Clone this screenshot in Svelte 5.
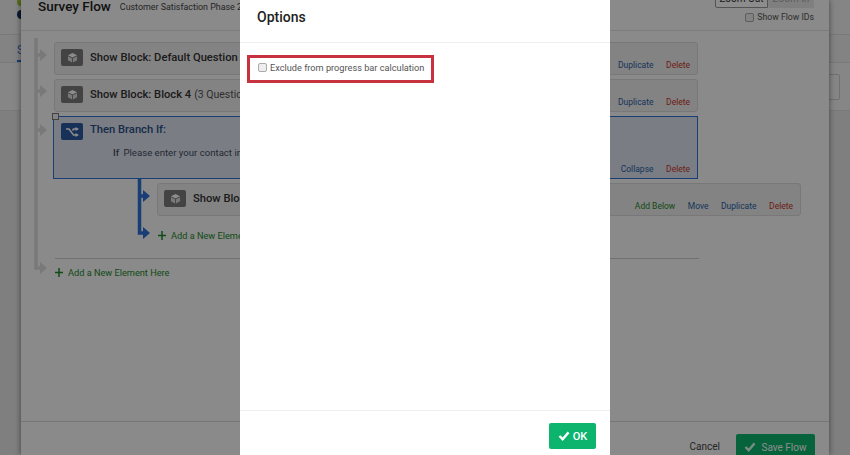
<script>
	const blocks = [
		{ title: 'Show Block: Default Question', extra: '', actions: [['Duplicate', 'blue'], ['Delete', 'red']] },
		{ title: 'Show Block: Block 4', extra: '(3 Questions)', actions: [['Duplicate', 'blue'], ['Delete', 'red']] }
	];
	const subActions = [['Add Below', 'green'], ['Move', 'blue'], ['Duplicate', 'blue'], ['Delete', 'red']];
</script>

{#snippet cube()}
	<span class="icon">
		<svg width="11" height="11" viewBox="0 0 12 12">
			<path d="M6 1 L11 3.500 L6 6 L1 3.500 Z" fill="#fff" />
			<path d="M1 4.500 L5.500 6.800 V11.500 L1 9 Z M11 4.500 L6.500 6.800 V11.500 L11 9 Z" fill="#ddd" />
		</svg>
	</span>
{/snippet}

{#snippet plus()}
	<svg width="8" height="9" viewBox="0 0 8 9"><path d="M4 0 V9 M0 4.500 H8" stroke="#1c8a2a" stroke-width="1.500" /></svg>
{/snippet}

{#snippet check(color)}
	<svg width="12" height="10" viewBox="0 0 13 11"><path d="M1.500 5.500 L5 9 L11.500 1.500" fill="none" stroke={color} stroke-width="2.600" /></svg>
{/snippet}

<div class="page">
	<div class="backdrop">
		<div class="band top"><span class="logo green"></span><span class="logo navy"></span></div>
		<div class="band tabs"><span class="tab">S</span></div>
		<div class="band tools"><span class="search"></span></div>
		<div class="band rest"></div>
	</div>

	<section class="panel">
		<header class="flow-head">
			<h1>Survey Flow</h1>
			<span class="survey-name">Customer Satisfaction Phase 2</span>
			<div class="zoom-tools">
				<div class="zoom-buttons">
					<button class="zoom-out">Zoom Out</button>
					<button class="zoom-in">Zoom In</button>
				</div>
				<label class="flow-ids"><input type="checkbox" />Show Flow IDs</label>
			</div>
		</header>

		<div class="canvas">
			<svg class="connectors" width="808" height="260" viewBox="0 0 808 260">
				<path d="M15 0 V230 H20 M15 17 H20 M15 53 H20 M15 92 H20" fill="none" stroke="#dcdcdc" stroke-width="3.500" />
				<path d="M19 11 L26 17 L19 23 Z M19 47 L26 53 L19 59 Z M19 86 L26 92 L19 98 Z M19 224 L26 230 L19 236 Z" fill="#dcdcdc" />
				<path d="M118.500 141 V195 H123 M118.500 158 H123" fill="none" stroke="#2f6fd6" stroke-width="3.500" />
				<path d="M122 152 L129 158 L122 164 Z M122 189 L129 195 L122 201 Z" fill="#2f6fd6" />
			</svg>

			{#each blocks as block}
				<div class="card">
					{@render cube()}
					<span class="title">{block.title}</span>
					{#if block.extra}<span class="extra">{block.extra}</span>{/if}
					<div class="actions">
						{#each block.actions as [label, tone]}
							<a class={tone} href="#top">{label}</a>
						{/each}
					</div>
				</div>
			{/each}

			<div class="branch">
				<span class="collapse-box"></span>
				<div class="branch-head">
					<span class="icon navy-icon">
						<svg width="14" height="10" viewBox="0 0 14 10">
							<path d="M1 2 H4 L8.500 8 H11" fill="none" stroke="#fff" stroke-width="1.500" />
							<path d="M7.500 3.500 L8.500 2 H11" fill="none" stroke="#fff" stroke-width="1.500" />
							<path d="M10.500 0 L14 2 L10.500 4 Z M10.500 6 L14 8 L10.500 10 Z" fill="#fff" />
						</svg>
					</span>
					<span class="title branch-title">Then Branch If:</span>
				</div>
				<p class="condition"><b>If</b> Please enter your contact information</p>
				<div class="actions branch-actions">
					<a class="blue" href="#top">Collapse</a>
					<a class="red" href="#top">Delete</a>
				</div>
			</div>

			<div class="card sub">
				{@render cube()}
				<span class="title">Show Block: Block 3</span>
				<div class="actions">
					{#each subActions as [label, tone]}
						<a class={tone} href="#top">{label}</a>
					{/each}
				</div>
			</div>

			<div class="add nested">{@render plus()}<span>Add a New Element Here</span></div>
			<div class="add root">{@render plus()}<span>Add a New Element Here</span></div>
		</div>

		<footer class="flow-foot">
			<span class="cancel">Cancel</span>
			<button class="save">{@render check('#dfe')}Save Flow</button>
		</footer>
	</section>

	<div class="overlay"></div>

	<div class="modal">
		<header class="modal-head"><h2>Options</h2></header>
		<div class="modal-body">
			<label class="highlight"><input type="checkbox" />Exclude from progress bar calculation</label>
		</div>
		<footer class="modal-foot">
			<button class="ok">{@render check('#fff')}OK</button>
		</footer>
	</div>
</div>

<style>
	:global(body) {
		margin: 0;
	}

	.page {
		position: relative;
		width: 850px;
		height: 455px;
		overflow: hidden;
		font-family: Roboto, "Liberation Sans", sans-serif;
		color: #333;
	}

	.backdrop {
		display: flex;
		flex-direction: column;
		height: 100%;
		background: #f2f2f2;
	}

	.band {
		box-sizing: border-box;
		border-bottom: 1px solid #ddd;
		padding-left: 17px;
	}

	.band.top {
		height: 35px;
		position: relative;
	}

	.logo {
		position: absolute;
		left: 17px;
		width: 8px;
		border-radius: 50%;
	}

	.logo.green {
		top: -2px;
		height: 8px;
		background: #a5c63b;
	}

	.logo.navy {
		top: 10px;
		height: 9px;
		background: #10305f;
	}

	.band.tabs {
		height: 28px;
		background: #eee;
	}

	.tab {
		display: block;
		width: 12px;
		height: 27px;
		box-sizing: border-box;
		padding-top: 8px;
		border-bottom: 2px solid #2f6fd6;
		color: #2f6fd6;
		font-size: 12px;
	}

	.band.tools {
		height: 48px;
		background: #f4f4f4;
		position: relative;
	}

	.search {
		position: absolute;
		left: 800px;
		top: 11px;
		width: 38px;
		height: 24px;
		border: 1px solid #ccc;
		border-radius: 2px;
	}

	.band.rest {
		flex: 1;
		background: #e8e8ea;
		border: 0;
	}

	.panel {
		position: absolute;
		left: 21px;
		top: 0;
		width: 808px;
		height: 455px;
		display: flex;
		flex-direction: column;
		background: #fbfbfb;
		box-shadow: 0 0 6px rgba(0, 0, 0, 0.5);
	}

	.flow-head {
		height: 31px;
		flex: none;
		box-sizing: border-box;
		border-bottom: 1px solid #e2e2e2;
		display: flex;
		align-items: flex-start;
		padding-left: 17px;
	}

	.flow-head h1 {
		margin: 0;
		font-size: 13.500px;
		line-height: 13px;
		font-weight: 500;
		color: #222;
	}

	.survey-name {
		margin-left: 9px;
		font-size: 8.900px;
		line-height: 15px;
		color: #444;
	}

	.zoom-tools {
		margin-left: auto;
		margin-right: 15px;
		display: flex;
		flex-direction: column;
		align-items: flex-end;
	}

	.zoom-buttons {
		display: flex;
		margin-top: -12px;
		height: 20px;
	}

	.zoom-buttons button {
		width: 53px;
		font: inherit;
		font-size: 10px;
		padding: 0;
		background: #fff;
		border: 1px solid #999;
		border-radius: 2px 0 0 2px;
		color: #333;
	}

	.zoom-buttons .zoom-in {
		width: 46px;
		background: #e8e8e8;
		border: 0;
		color: #aaa;
	}

	.flow-ids {
		display: flex;
		align-items: center;
		gap: 3px;
		font-size: 8.700px;
		margin-top: 4px;
		color: #555;
	}

	.flow-ids input,
	.highlight input {
		appearance: none;
		flex: none;
		box-sizing: border-box;
		width: 9px;
		height: 9px;
		margin: 0;
		border: 1px solid #aaa;
		border-radius: 2px;
		background: #eee;
	}

	.canvas {
		position: relative;
		flex: 1;
		box-sizing: border-box;
		padding: 11px 0 0 33px;
	}

	.connectors {
		position: absolute;
		left: 0;
		top: 7px;
	}

	.card {
		position: relative;
		box-sizing: border-box;
		width: 644px;
		height: 33px;
		margin-bottom: 4px;
		padding: 6px 0 0 6px;
		display: flex;
		align-items: flex-start;
		background: #eeeeee;
		border: 1px solid #dadada;
		border-radius: 3px;
	}

	.card.sub {
		margin: 4px 0 0 103px;
	}

	.icon {
		flex: none;
		width: 22px;
		height: 17px;
		display: flex;
		align-items: center;
		justify-content: center;
		background: #7a7a7a;
		border-radius: 2px;
	}

	.navy-icon {
		background: #2c5aa0;
	}

	.title {
		margin-left: 7px;
		font-size: 11.200px;
		line-height: 17px;
		font-weight: 500;
		color: #333;
	}

	.extra {
		margin-left: 3px;
		font-size: 10.500px;
		line-height: 18px;
		color: #555;
	}

	.actions {
		position: absolute;
		right: 7px;
		bottom: 3px;
		display: flex;
		gap: 12.500px;
		font-size: 8.500px;
		line-height: 11px;
	}

	.actions a {
		text-decoration: none;
	}

	.blue {
		color: #2a62a6;
	}

	.red {
		color: #c9352a;
	}

	.green {
		color: #1c8a2a;
	}

	.branch {
		position: relative;
		box-sizing: border-box;
		width: 645px;
		height: 63px;
		margin-left: -1px;
		padding: 6px 0 0 7px;
		background: #dfe5f0;
		border: 1.500px solid #2f6fd6;
	}

	.collapse-box {
		position: absolute;
		left: -2px;
		top: -4px;
		width: 5px;
		height: 5px;
		background: #eee;
		border: 1px solid #777;
	}

	.branch-head {
		display: flex;
	}

	.branch-title {
		color: #2a4d85;
		line-height: 14px;
	}

	.condition {
		margin: 7px 0 0 52px;
		font-size: 9.600px;
		line-height: 12px;
		color: #3f4c63;
		white-space: nowrap;
	}

	.condition b {
		margin-right: 2px;
		font-weight: 500;
	}

	.add {
		display: flex;
		align-items: center;
		gap: 5px;
		font-size: 9.200px;
		color: #1c8a2a;
	}

	.add.nested {
		margin: 13px 0 0 104px;
		height: 12px;
	}

	.add.root {
		box-sizing: border-box;
		width: 644px;
		margin-top: 17px;
		margin-left: 1px;
		padding-top: 6px;
		border-top: 1px solid #ccc;
		height: 21px;
	}

	.flow-foot {
		flex: none;
		height: 34px;
		box-sizing: border-box;
		border-top: 1px solid #d8d8d8;
		display: flex;
		align-items: flex-start;
		justify-content: flex-end;
		padding: 12px 14px 0 0;
	}

	.cancel {
		margin: 7px 16px 0 0;
		font-size: 10px;
		color: #444;
	}

	.save {
		width: 79px;
		height: 26px;
		display: flex;
		align-items: center;
		justify-content: center;
		gap: 5px;
		border: 0;
		border-radius: 2px;
		padding: 0;
		background: #0cb46e;
		color: #fff;
		font: inherit;
		font-size: 10px;
	}

	.overlay {
		position: absolute;
		inset: 0;
		background: rgba(0, 0, 0, 0.45);
	}

	.modal {
		position: absolute;
		left: 240px;
		top: 0;
		width: 370px;
		height: 455px;
		display: flex;
		flex-direction: column;
		background: #fff;
	}

	.modal-head {
		height: 43px;
		box-sizing: border-box;
		border-bottom: 1px solid #eee;
		padding: 9px 0 0 17px;
	}

	.modal-head h2 {
		margin: 0;
		font-size: 14px;
		line-height: 17px;
		font-weight: 500;
		color: #222;
	}

	.modal-body {
		flex: 1;
		padding: 12px 0 0 7px;
	}

	.highlight {
		box-sizing: border-box;
		width: 187px;
		height: 28px;
		display: flex;
		align-items: center;
		gap: 3px;
		padding: 0 0 3px 8px;
		border: 3px solid #c8323f;
		font-size: 9.200px;
		color: #555;
		white-space: nowrap;
	}

	.modal-foot {
		height: 45px;
		box-sizing: border-box;
		border-top: 1px solid #eee;
		display: flex;
		justify-content: flex-end;
		padding: 12px 14px 0 0;
	}

	.ok {
		width: 47px;
		height: 26px;
		display: flex;
		align-items: center;
		justify-content: center;
		gap: 3px;
		border: 0;
		border-radius: 2px;
		padding: 0;
		background: #0cb46e;
		color: #fff;
		font: inherit;
		font-size: 11px;
		font-weight: 500;
	}
</style>
